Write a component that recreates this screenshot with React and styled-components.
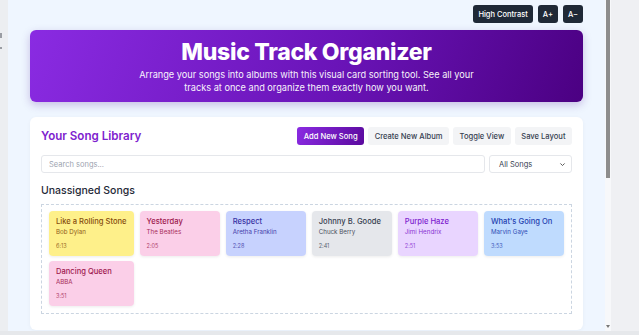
import React from 'react'
import styled, { createGlobalStyle } from 'styled-components';

const FONT = '"Inter", "Open Sans", sans-serif';
const PURPLE_TEXT = '#7e22ce';

const songs = [
  { title: 'Like a Rolling Stone', artist: 'Bob Dylan', time: '6:13', bg: '#fef08a', fg: '#854d0e' },
  { title: 'Yesterday', artist: 'The Beatles', time: '2:05', bg: '#fbcfe8', fg: '#9d174d' },
  { title: 'Respect', artist: 'Aretha Franklin', time: '2:28', bg: '#c7d2fe', fg: '#3730a3' },
  { title: 'Johnny B. Goode', artist: 'Chuck Berry', time: '2:41', bg: '#e5e7eb', fg: '#374151' },
  { title: 'Purple Haze', artist: 'Jimi Hendrix', time: '2:51', bg: '#e9d5ff', fg: '#7e22ce' },
  { title: "What's Going On", artist: 'Marvin Gaye', time: '3:53', bg: '#bfdbfe', fg: '#1e40af' },
  { title: 'Dancing Queen', artist: 'ABBA', time: '3:51', bg: '#fbcfe8', fg: '#9d174d' },
];

const GlobalStyle = createGlobalStyle`
  html, body { margin: 0; padding: 0; }
  body {
    width: 639px;
    height: 335px;
    overflow: hidden;
    background: #eceef1;
    font-family: ${FONT};
  }
`;

function App() {
  return (
    <>
      <GlobalStyle />
      <Screen>
        <Host>
          <HostEdge><EdgeMark tall /><EdgeMark /></HostEdge>
          <Viewport>
            <TopBar>
              <ToolButton>High Contrast</ToolButton>
              <ToolButton>A+</ToolButton>
              <ToolButton>A−</ToolButton>
            </TopBar>

            <Hero>
              <HeroTitle>Music Track Organizer</HeroTitle>
              <HeroText>
                Arrange your songs into albums with this visual card sorting tool. See all your
                tracks at once and organize them exactly how you want.
              </HeroText>
            </Hero>

            <Library>
              <LibraryHead>
                <LibraryTitle>Your Song Library</LibraryTitle>
                <Actions>
                  <ActionButton primary>Add New Song</ActionButton>
                  <ActionButton>Create New Album</ActionButton>
                  <ActionButton>Toggle View</ActionButton>
                  <ActionButton>Save Layout</ActionButton>
                </Actions>
              </LibraryHead>

              <FilterRow>
                <SearchBox placeholder="Search songs..." />
                <Select>
                  <span>All Songs</span>
                  <svg width="7" height="7" viewBox="0 0 10 10">
                    <path d="M2 3.5 L5 6.5 L8 3.5" fill="none" stroke="#555" strokeWidth="1.4" />
                  </svg>
                </Select>
              </FilterRow>

              <SectionTitle>Unassigned Songs</SectionTitle>
              <DropZone>
                {songs.map(s => (
                  <SongCard key={s.title} bg={s.bg} fg={s.fg}>
                    <SongTitle>{s.title}</SongTitle>
                    <SongArtist>{s.artist}</SongArtist>
                    <SongTime>{s.time}</SongTime>
                  </SongCard>
                ))}
              </DropZone>
            </Library>
          </Viewport>
          <Scrollbar>
            <Thumb />
            <ArrowDown />
          </Scrollbar>
          <HostSide />
        </Host>
        <HostBottom />
      </Screen>
    </>
  )
}

const Screen = styled.div`
  display: flex;
  flex-direction: column;
  height: 335px;
`;

const Host = styled.div`
  display: flex;
  height: 331px;
`;

const HostEdge = styled.div`
  width: 8px;
  display: flex;
  flex-direction: column;
  padding-top: 33px;
  gap: 9px;
`;

const EdgeMark = styled.div`
  width: 2px;
  height: ${p => p.tall ? '5px' : '2px'};
  background: #9a9da3;
`;

const Viewport = styled.div`
  width: 553px;
  padding: 0 22px;
  background: #eff6ff;
  overflow: hidden;
`;

const Scrollbar = styled.div`
  width: 6px;
  background: #f7f8fa;
  display: flex;
  flex-direction: column;
  justify-content: space-between;
  align-items: center;
`;

const Thumb = styled.div`
  width: 4px;
  height: 178px;
  background: #8d8d8d;
`;

const ArrowDown = styled.div`
  width: 0;
  height: 0;
  margin-bottom: 3px;
  border-left: 2.5px solid transparent;
  border-right: 2.5px solid transparent;
  border-top: 3px solid #777;
`;

const HostSide = styled.div`
  flex: 1;
  background: #eff0f3;
`;

const HostBottom = styled.div`
  height: 4px;
  background: #e6e8eb;
`;

const TopBar = styled.div`
  display: flex;
  justify-content: flex-end;
  gap: 5px;
  padding-top: 5px;
`;

const ToolButton = styled.button`
  height: 18px;
  padding: 0 5px;
  min-width: 19px;
  border: none;
  border-radius: 3px;
  background: #1f2937;
  color: #fff;
  font-family: ${FONT};
  font-size: 7.5px;
  font-weight: 500;
`;

const Hero = styled.div`
  margin-top: 7px;
  height: 72px;
  box-sizing: border-box;
  padding-top: 7px;
  border-radius: 6px;
  background: linear-gradient(110deg, #8a2be2 0%, #6a14b8 55%, #4b0082 100%);
  box-shadow: 0 3px 8px rgba(76, 29, 149, 0.25);
  color: #fff;
  text-align: center;
`;

const HeroTitle = styled.h1`
  margin: 0;
  font-size: 23px;
  line-height: 30px;
  font-weight: 800;
  letter-spacing: -0.3px;
`;

const HeroText = styled.p`
  margin: 1px auto 0;
  width: 350px;
  font-size: 9.2px;
  line-height: 13px;
  opacity: 0.95;
`;

const Library = styled.div`
  margin-top: 15px;
  background: #fff;
  border-radius: 6px;
  padding: 10px 11px 16px;
  box-shadow: 0 1px 4px rgba(0, 0, 0, 0.04);
`;

const LibraryHead = styled.div`
  display: flex;
  justify-content: space-between;
  align-items: center;
`;

const LibraryTitle = styled.h2`
  margin: 0;
  font-size: 11.6px;
  font-weight: 600;
  color: ${PURPLE_TEXT};
`;

const Actions = styled.div`
  display: flex;
  gap: 4px;
`;

const ActionButton = styled.button`
  height: 18px;
  padding: 0 6.5px;
  border: none;
  border-radius: 3px;
  font-family: ${FONT};
  font-size: 7.6px;
  font-weight: 500;
  background: ${p => p.primary ? 'linear-gradient(110deg, #8a2be2, #5b0a9e)' : '#f3f4f6'};
  color: ${p => p.primary ? '#fff' : '#374151'};
`;

const FilterRow = styled.div`
  display: flex;
  gap: 4px;
  margin-top: 10px;
`;

const SearchBox = styled.input`
  flex: 1;
  height: 18px;
  box-sizing: border-box;
  border: 1px solid #e5e7eb;
  border-radius: 3px;
  padding: 0 7px;
  font-family: ${FONT};
  font-size: 7.5px;
  outline: none;
  &::placeholder { color: #9ca3af; }
`;

const Select = styled.div`
  width: 83px;
  height: 18px;
  box-sizing: border-box;
  border: 1px solid #e5e7eb;
  border-radius: 3px;
  padding: 0 5px 0 9px;
  display: flex;
  align-items: center;
  justify-content: space-between;
  font-size: 7.5px;
  color: #374151;
`;

const SectionTitle = styled.h3`
  margin: 11px 0 6px;
  font-size: 10.5px;
  line-height: 14px;
  font-weight: 500;
  color: #1f2937;
`;

const DropZone = styled.div`
  display: grid;
  grid-template-columns: repeat(6, 1fr);
  gap: 5px 6px;
  padding: 6px 7px 7px;
  min-height: 95px;
  border: 1px dashed #cbd5e1;
`;

const SongCard = styled.div`
  height: 45px;
  box-sizing: border-box;
  padding: 6px 7px;
  border-radius: 4px;
  background: ${p => p.bg};
  color: ${p => p.fg};
  box-shadow: 0 1px 3px rgba(0, 0, 0, 0.08);
  display: flex;
  flex-direction: column;
`;

const SongTitle = styled.div`
  font-size: 7.6px;
  font-weight: 500;
  line-height: 10px;
  white-space: nowrap;
`;

const SongArtist = styled.div`
  font-size: 6.2px;
  line-height: 9px;
  opacity: 0.9;
`;

const SongTime = styled.div`
  margin-top: auto;
  font-size: 5.5px;
  line-height: 7px;
  opacity: 0.8;
`;

export default App
